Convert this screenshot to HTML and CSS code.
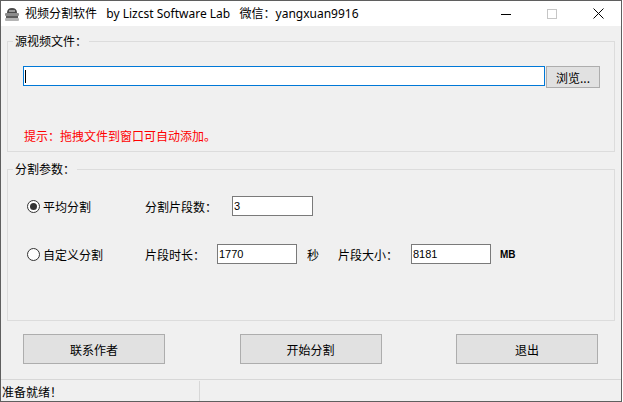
FILE: index.html
```html
<!DOCTYPE html>
<html lang="zh-CN">
<head>
  <meta charset="UTF-8">
  <meta name="viewport" content="width=device-width, initial-scale=1.0">
  <title>视频分割软件</title>
  <link rel="stylesheet" href="styles.css">
</head>
<body>
  <div class="window">
    <!-- Title bar -->
    <div class="titlebar">
      <svg class="app-icon" width="16" height="16" viewBox="0 0 16 16">
        <path d="M3 7 Q3 2 8 2 Q13 2 13 7 Z" fill="#4a4a4a"/>
        <rect x="5" y="4" width="6" height="2" fill="#9a9a9a"/>
        <rect x="1" y="7" width="14" height="3" rx="1" fill="#8c8c8c"/>
        <rect x="2" y="10" width="12" height="2" fill="#5c5c5c"/>
        <rect x="1" y="12" width="14" height="3" rx="1" fill="#b4b4b4"/>
      </svg>
      <span class="title">视频分割软件&nbsp;&nbsp; by Lizcst Software Lab&nbsp;&nbsp; 微信：yangxuan9916</span>
      <div class="caption">
        <span class="cap-btn">
          <svg width="10" height="10" viewBox="0 0 10 10"><path d="M0 5.5 H10" stroke="#000" stroke-width="1"/></svg>
        </span>
        <span class="cap-btn">
          <svg width="10" height="10" viewBox="0 0 10 10"><rect x="0.5" y="0.5" width="9" height="9" fill="none" stroke="#c6c6c6" stroke-width="1"/></svg>
        </span>
        <span class="cap-btn">
          <svg width="11" height="11" viewBox="0 0 11 11"><path d="M0.5 0.5 L10.5 10.5 M10.5 0.5 L0.5 10.5" stroke="#000" stroke-width="1"/></svg>
        </span>
      </div>
    </div>

    <div class="client">
      <!-- Source file -->
      <fieldset class="group group-source">
        <legend>源视频文件：</legend>
        <div class="path-row">
          <div class="path-field"><span class="caret"></span><input type="text" class="path-input"></div>
          <button class="btn btn-browse">浏览...</button>
        </div>
        <p class="hint">提示：拖拽文件到窗口可自动添加。</p>
      </fieldset>

      <!-- Split params -->
      <fieldset class="group group-params">
        <legend>分割参数：</legend>
        <div class="param-row row-even">
          <label class="option"><input type="radio" name="mode" checked> 平均分割</label>
          <span class="field-label label-count">分割片段数：</span>
          <input type="text" class="num-input input-count" value="3">
        </div>
        <div class="param-row row-custom">
          <label class="option"><input type="radio" name="mode"> 自定义分割</label>
          <span class="field-label label-time">片段时长：</span>
          <input type="text" class="num-input" value="1770">
          <span class="unit unit-sec">秒</span>
          <span class="field-label label-size">片段大小：</span>
          <input type="text" class="num-input" value="8181">
          <span class="unit unit-mb">MB</span>
        </div>
      </fieldset>

      <div class="actions">
        <button class="btn btn-action">联系作者</button>
        <button class="btn btn-action">开始分割</button>
        <button class="btn btn-action">退出</button>
      </div>
    </div>

    <div class="statusbar">
      <span class="status-cell status-main">准备就绪！</span>
      <span class="status-cell"></span>
    </div>
  </div>
</body>
</html>
```

FILE: styles.css
```css
body {
  margin: 0;
  background: #ffffff;
  font-family: "Noto Sans CJK SC", sans-serif;
  font-size: 12px;
  color: #000;
}

.window {
  width: 622px;
  height: 402px;
  box-sizing: border-box;
  border: 1px solid #5f5f5f;
  display: flex;
  flex-direction: column;
  background: #f0f0f0;
}

/* Title bar */
.titlebar {
  height: 25px;
  background: #ffffff;
  display: flex;
  align-items: center;
}

.app-icon {
  margin-left: 3px;
  margin-right: 5px;
}

.title {
  font-family: "Noto Sans", "Noto Sans CJK SC", sans-serif;
  font-size: 12px;
  line-height: 16px;
  white-space: nowrap;
  flex: 1;
}

.caption {
  display: flex;
  height: 100%;
}

.cap-btn {
  width: 46px;
  display: flex;
  align-items: center;
  justify-content: center;
}

/* Client area */
.client {
  height: 353px;
  display: flex;
  flex-direction: column;
}

.group {
  margin: 0 6px;
  padding: 0;
  border: 1px solid #dcdcdc;
  min-width: 0;
}

.group legend {
  margin-left: 5px;
  padding: 0 2px;
  line-height: 14px;
  font-size: 12px;
}

.group-source {
  margin-top: 8px;
}

.group-params {
  margin-top: 10px;
}

.path-row {
  display: flex;
  align-items: flex-start;
  margin: 18px 0 0 15px;
}

.path-field {
  width: 522px;
  height: 20px;
  box-sizing: border-box;
  border: 1px solid #0078d7;
  background: #fff;
  display: flex;
  align-items: center;
  padding-left: 1px;
}

.caret {
  width: 1px;
  height: 13px;
  background: #000;
}

.path-input {
  border: none;
  outline: none;
  background: transparent;
  flex: 1;
  padding: 0;
  height: 16px;
}

.btn {
  font-family: "Noto Sans CJK SC", sans-serif;
  font-size: 12px;
  background: #e1e1e1;
  border: 1px solid #adadad;
  color: #000;
  padding: 0;
  box-sizing: border-box;
}

.btn-browse {
  width: 54px;
  height: 22px;
  margin-left: 1px;
}

.hint {
  margin: 41px 0 8px 16px;
  line-height: 14px;
  color: #ff0000;
}

/* Params */
.param-row {
  display: flex;
  align-items: center;
  height: 20px;
  padding-left: 19px;
}

.row-even {
  margin-top: 20px;
}

.row-custom {
  margin-top: 28px;
  margin-bottom: 56px;
}

.option {
  width: 118px;
  display: flex;
  align-items: center;
  white-space: nowrap;
}

.option input {
  appearance: none;
  width: 13px;
  height: 13px;
  margin: 0 3px 0 0;
  border: 1px solid #333;
  border-radius: 50%;
  background: #fff;
  display: grid;
  place-content: center;
}

.option input:checked::before {
  content: "";
  width: 7px;
  height: 7px;
  border-radius: 50%;
  background: #333;
}

.field-label {
  white-space: nowrap;
}

.label-count {
  width: 87px;
}

.label-time {
  width: 72px;
}

.label-size {
  width: 73px;
  margin-left: 19px;
}

.num-input {
  width: 80px;
  height: 20px;
  box-sizing: border-box;
  border: 1px solid #7a7a7a;
  background: #fff;
  padding: 0 1px;
  font-family: "Liberation Sans", sans-serif;
  font-size: 11px;
  outline: none;
}

.input-count {
  width: 81px;
}

.unit-sec {
  margin-left: 10px;
  width: 12px;
}

.unit-mb {
  margin-left: 9px;
  font-family: "Liberation Sans", sans-serif;
  font-size: 10px;
  font-weight: bold;
}

/* Bottom buttons */
.actions {
  display: flex;
  justify-content: space-between;
  margin-top: 13px;
  padding: 0 23px 0 22px;
}

.btn-action {
  width: 142px;
  height: 30px;
}

/* Status bar */
.statusbar {
  height: 22px;
  box-sizing: border-box;
  border-top: 1px solid #d7d7d7;
  display: flex;
}

.status-cell {
  display: flex;
  align-items: center;
  padding-left: 1px;
}

.status-main {
  width: 199px;
  box-sizing: border-box;
  border-right: 1px solid #d7d7d7;
  margin-top: 1px;
}
```
